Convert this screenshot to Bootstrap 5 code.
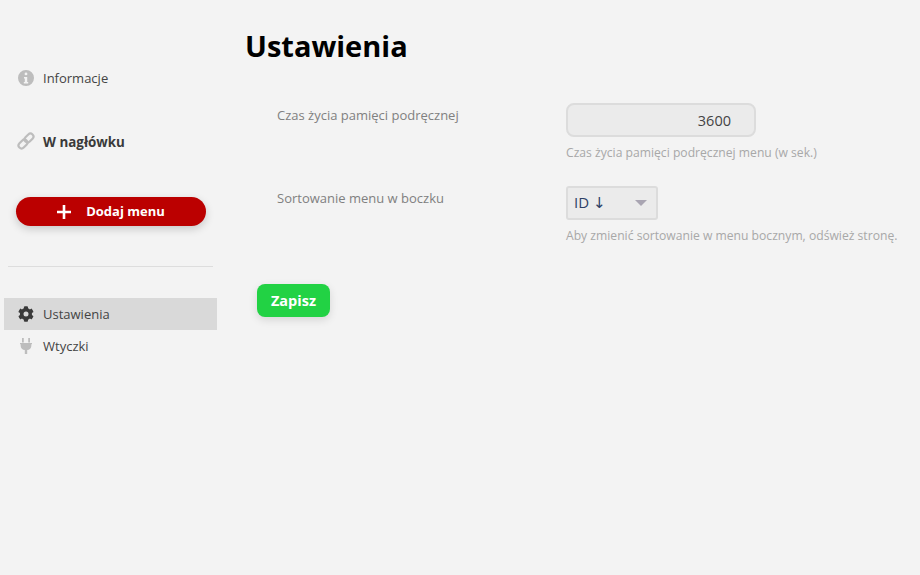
<!DOCTYPE html>
<html lang="pl">
<head>
<meta charset="utf-8">
<title>Ustawienia</title>
<link href="https://cdn.jsdelivr.net/npm/bootstrap@5.3.0/dist/css/bootstrap.min.css" rel="stylesheet">
<style>
html, body { height: 100%; }
body { background: #f3f3f3; font-family: "Open Sans", "Noto Sans", sans-serif; font-size: 13px; color: #444; overflow: hidden; }
.side-col { width: 217px; padding: 62px 0 0 4px; flex: none; }
.side-link { height: 32px; padding-left: 14px; gap: 9px; color: #444; text-decoration: none; }
.side-link span { margin-top: 2px; }
.side-link.is-active { background: #d9d9d9; }
.side-ico { width: 16px; height: 16px; flex: none; fill: #bdbdbd; }
.is-active .side-ico { fill: #3a3a3a; }
.head-link { font-weight: 700; font-size: 13.4px; margin-top: 31px; color: #3a3a3a; }
.chain-ico { width: 18px; height: 18px; flex: none; margin: 0 -1px 0 -1px; fill: none; stroke: #bdbdbd; stroke-width: 2.2; }
.add-btn { width: 190px; height: 29px; margin: 40px 0 0 12px; background: #bb0000; border: 0; border-radius: 15px; color: #fff; font-size: 13px; font-weight: 700; gap: 15px; box-shadow: 0 3px 8px rgba(0,0,0,.18); }
.side-rule { margin: 40px 0 31px 4px; width: 205px; border: 0; border-top: 1px solid #ddd; opacity: 1; }
.main-col { padding: 24px 0 0 28px; }
.page-title { font-size: 29px; font-weight: 700; color: #000; line-height: 44px; margin: 0; }
.set-row { padding-left: 32px; }
.set-first { margin-top: 35px; }
.set-second { margin-top: 25px; }
.set-label { width: 289px; flex: none; color: #808080; padding-top: 3px; }
.set-hint { color: #a8a8a8; font-size: 12.15px; margin-top: 8px; line-height: 16px; white-space: nowrap; }
.num-field { width: 190px; height: 34px; background: #ebebeb; border: 2px solid #dcdcdc; border-radius: 8px; text-align: right; padding: 0 23px 0 0; font-size: 14.5px; color: #444; font-family: inherit; }
.pick-field { width: 92px; height: 34px; background: #ebebeb; border: 2px solid #dcdcdc; border-radius: 3px; padding-left: 6px; font-size: 15px; color: #2d3f66; }
.pick-arrow { font-family: "DejaVu Sans", sans-serif; font-size: 15px; }
.pick-caret { width: 0; height: 0; border-left: 6px solid transparent; border-right: 6px solid transparent; border-top: 6px solid #a9a5b2; margin-right: 9px; }
.save-btn { margin: 40px 0 0 12px; width: 73px; height: 33px; background: #22d244; border: 0; border-radius: 8px; color: #fff; font-weight: 700; font-size: 14.5px; box-shadow: 0 3px 8px rgba(0,0,0,.12); }
</style>
</head>
<body>
<div class="d-flex h-100">
  <div class="side-col">
    <a href="#" class="side-link d-flex align-items-center">
      <svg class="side-ico" viewBox="0 0 16 16"><path fill-rule="evenodd" d="M8 0a8 8 0 1 0 0 16A8 8 0 0 0 8 0zM6.600 3.900a1.400 1.400 0 1 1 2.800 0 1.400 1.400 0 0 1-2.800 0zM6 7h3.200v5h1v1.400H5.800V12h1V8.400H6z"/></svg>
      <span>Informacje</span>
    </a>
    <a href="#" class="side-link head-link d-flex align-items-center">
      <svg class="chain-ico" viewBox="0 0 18 18"><rect x="1" y="9" width="10" height="6" rx="3" transform="rotate(-45 6 12)"/><rect x="7" y="3" width="10" height="6" rx="3" transform="rotate(-45 12 6)"/></svg>
      <span>W nagłówku</span>
    </a>
    <button class="add-btn d-flex align-items-center justify-content-center">
      <svg width="14" height="14" viewBox="0 0 14 14"><path d="M5.700 0h2.600v5.700H14v2.600H8.300V14H5.700V8.300H0V5.700h5.700z" fill="#fff"/></svg>
      Dodaj menu
    </button>
    <hr class="side-rule">
    <a href="#" class="side-link is-active d-flex align-items-center">
      <svg class="side-ico" viewBox="0 0 512 512"><path d="M487 316l-43-25c4-23 4-47 0-70l43-25c5-3 7-9 6-14-11-36-30-68-55-95-4-4-10-5-15-2l-43 25c-18-15-39-27-61-35V25c0-6-4-11-10-12-37-8-75-8-110 0-6 1-10 6-10 12v50c-22 8-43 20-61 35L85 85c-5-3-11-2-15 2-25 27-44 59-55 95-2 5 1 11 6 14l43 25c-4 23-4 47 0 70l-43 25c-5 3-7 9-6 14 11 36 30 68 55 95 4 4 10 5 15 2l43-25c18 15 39 27 61 35v50c0 6 4 11 10 12 37 8 75 8 110 0 6-1 10-6 10-12v-50c22-8 43-20 61-35l43 25c5 3 11 2 15-2 25-27 44-59 55-95 1-5-1-11-6-14zM256 336a80 80 0 1 1 0-160 80 80 0 0 1 0 160z"/></svg>
      <span>Ustawienia</span>
    </a>
    <a href="#" class="side-link d-flex align-items-center">
      <svg class="side-ico" viewBox="0 0 16 16"><path d="M4 0h1.800v4.500H4zM10.200 0H12v4.500h-1.800zM2 5h12v1.200h-.7V8c0 2.300-1.700 3.800-4.100 4.100V16H6.800v-3.900C4.400 11.800 2.700 10.300 2.700 8V6.200H2z"/></svg>
      <span>Wtyczki</span>
    </a>
  </div>
  <div class="main-col flex-grow-1">
    <h1 class="page-title">Ustawienia</h1>
    <div class="set-row set-first d-flex">
      <div class="set-label">Czas życia pamięci podręcznej</div>
      <div>
        <input class="num-field d-block" type="text" value="3600">
        <div class="set-hint">Czas życia pamięci podręcznej menu (w sek.)</div>
      </div>
    </div>
    <div class="set-row set-second d-flex">
      <div class="set-label">Sortowanie menu w boczku</div>
      <div>
        <div class="pick-field d-flex align-items-center justify-content-between"><span>ID <span class="pick-arrow">↓</span></span><span class="pick-caret"></span></div>
        <div class="set-hint">Aby zmienić sortowanie w menu bocznym, odśwież stronę.</div>
      </div>
    </div>
    <button class="save-btn">Zapisz</button>
  </div>
</div>
<script src="https://cdn.jsdelivr.net/npm/bootstrap@5.3.0/dist/js/bootstrap.bundle.min.js"></script>
</body>
</html>
